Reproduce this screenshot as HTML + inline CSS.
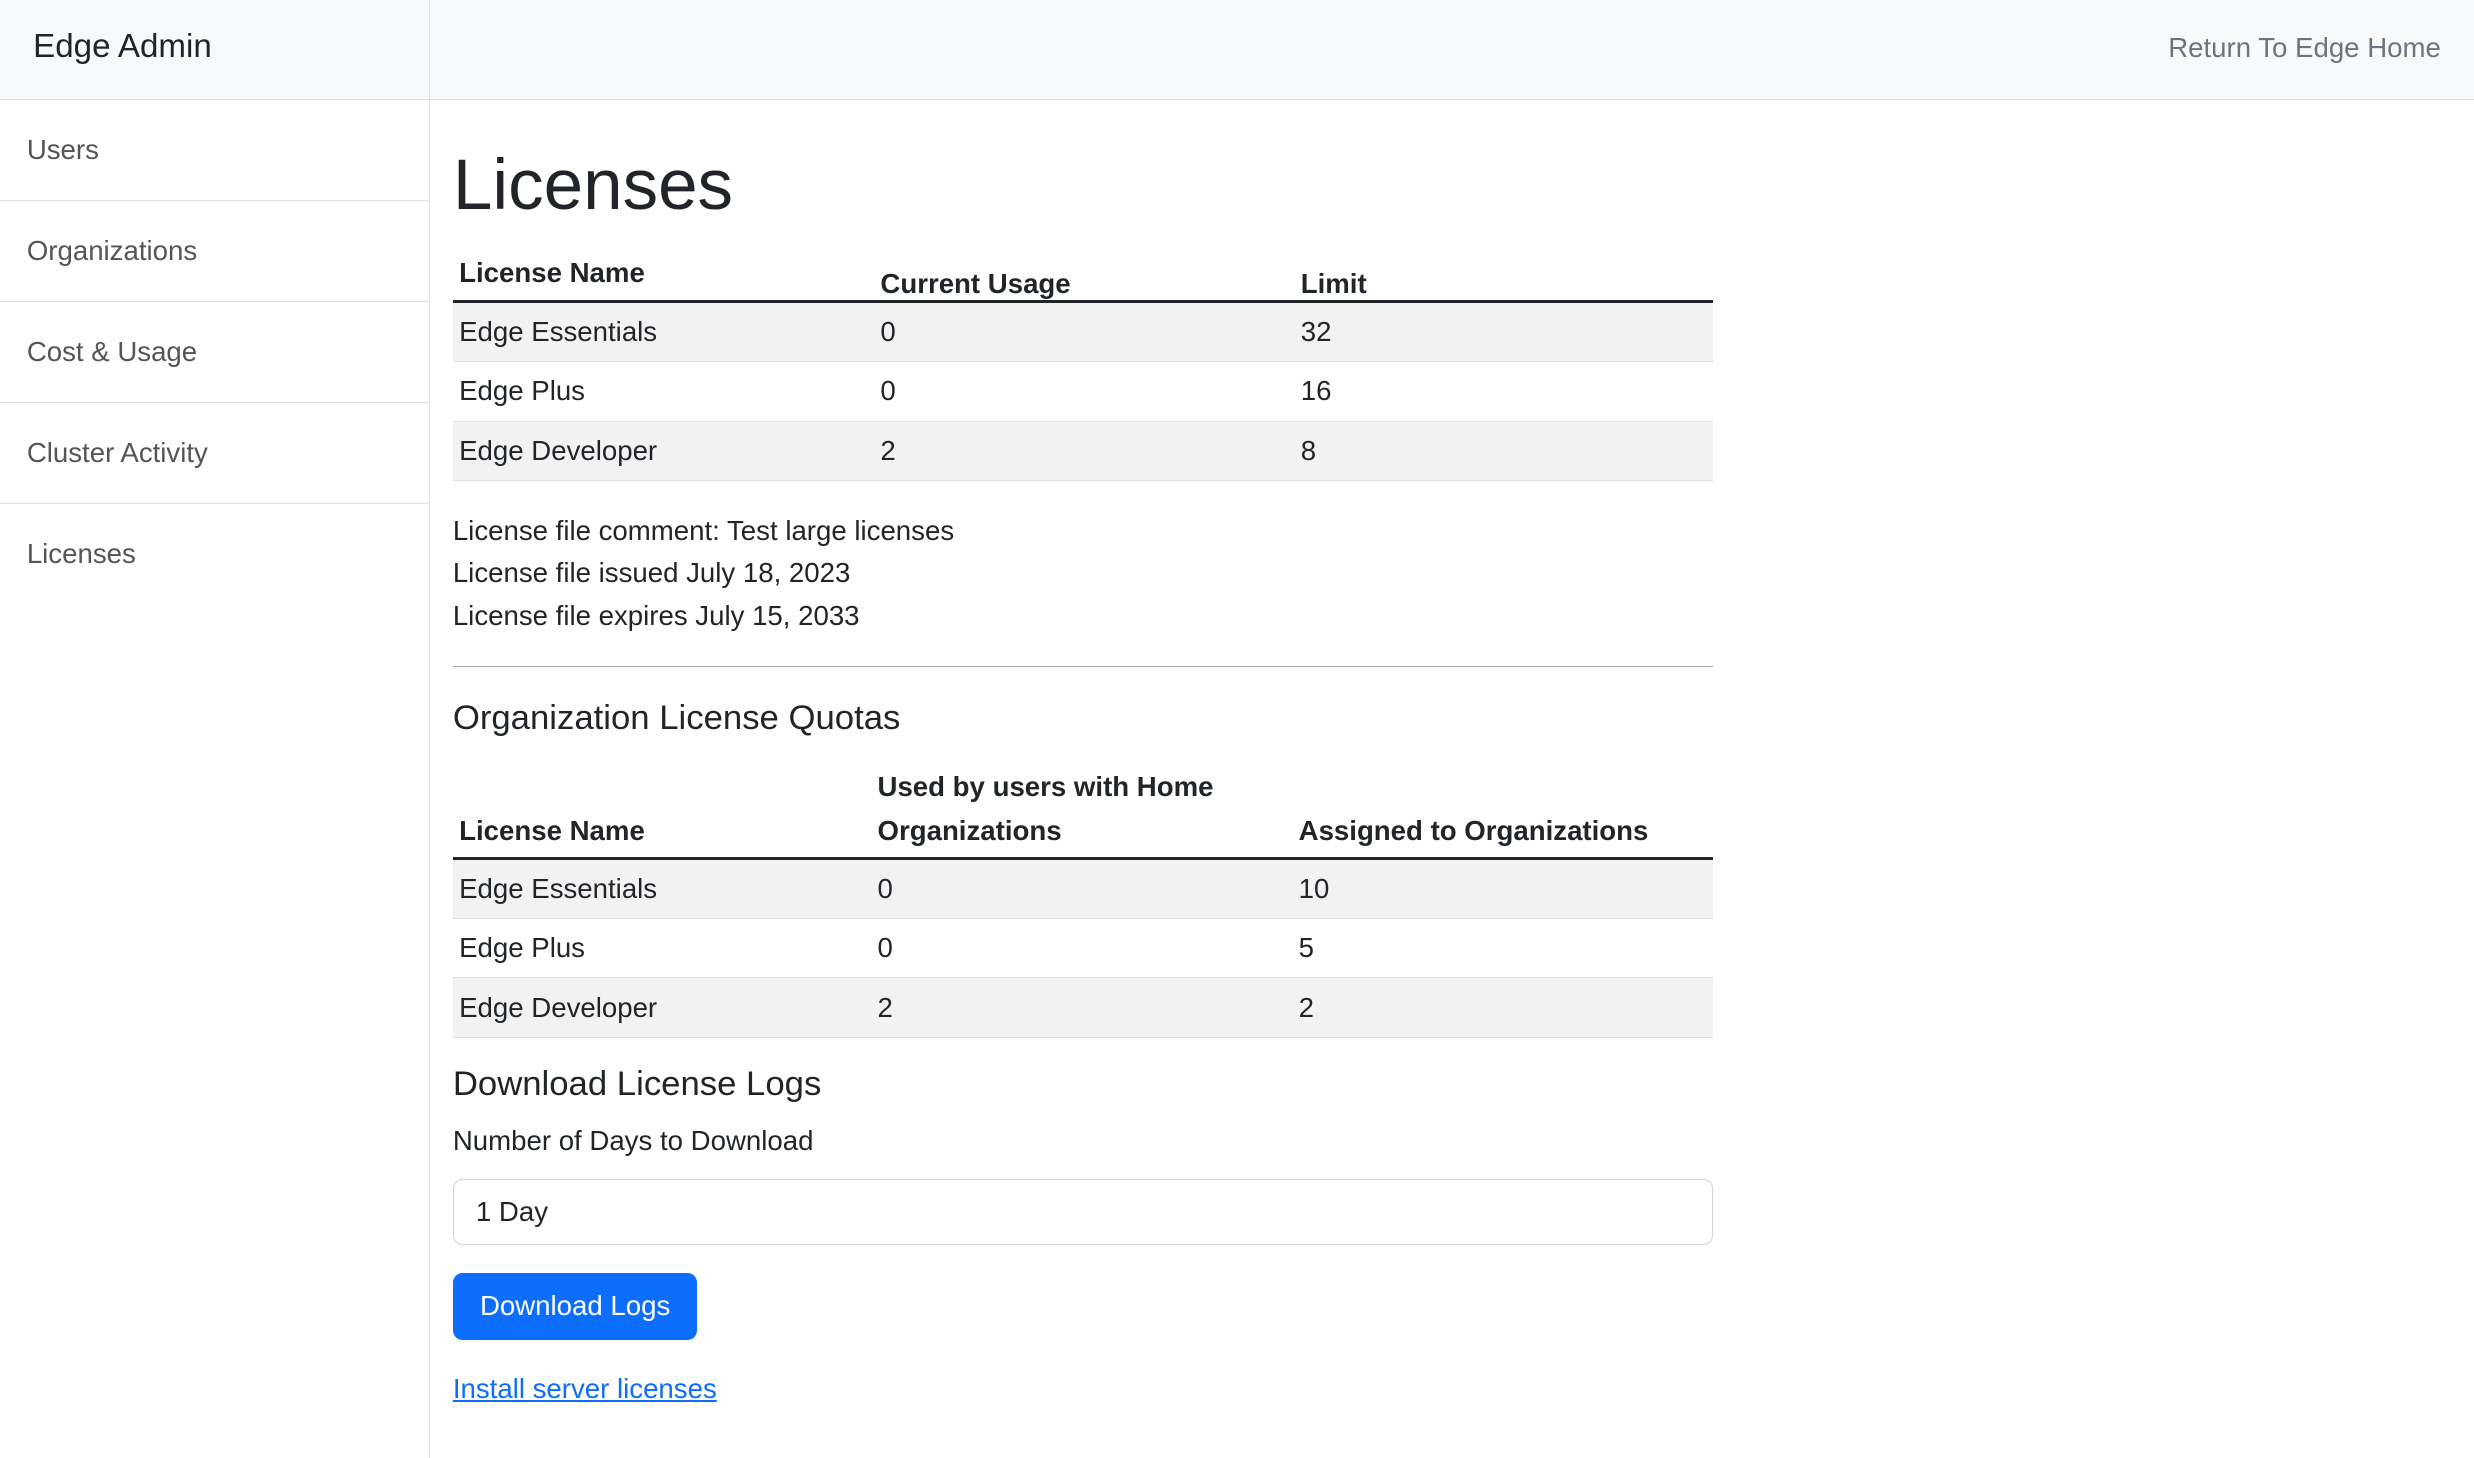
<!DOCTYPE html>
<html><head><meta charset="utf-8"><style>
html,body{margin:0;padding:0;}
body{width:1568px;height:924px;zoom:1.5778;font-family:"Liberation Sans",sans-serif;color:#212529;background:#fff;position:relative;overflow:hidden;font-size:17.5px;}
.top{position:absolute;left:0;top:0;width:1568px;height:63px;background:#f8f9fa;border-bottom:1px solid #dee2e6;}
.brand{position:absolute;left:21px;top:18px;font-size:21px;}
.ret{position:absolute;right:21px;top:20px;font-size:17.5px;color:#6c757d;}
.side{position:absolute;left:0;top:0;width:272px;height:924px;border-right:1px solid #dee2e6;}
.side .hd{height:63px;background:#f8f9fa;border-bottom:1px solid #dee2e6;}
.item{height:64px;border-bottom:1px solid #dee2e6;box-sizing:border-box;padding-left:17px;line-height:64px;color:#555;font-size:17.5px;}
.item:last-child{border-bottom:none;}
.main{position:absolute;left:287px;top:0;width:799px;}
h1{position:absolute;top:92px;left:0;margin:0;font-size:45px;font-weight:normal;}
table{border-collapse:collapse;width:799px;position:absolute;left:0;font-size:17.5px;}
th{text-align:left;font-weight:bold;padding:0 4px;vertical-align:bottom;border-bottom:2px solid #212529;width:266px;}
td{padding:0 4px;height:37px;border-bottom:1px solid #dee2e6;}
tr.s td{background:#f2f2f2;}
.abs{position:absolute;left:0;}
a{color:#0d6efd;}
</style></head><body>
<div class="top"><div class="ret">Return To Edge Home</div></div>
<div class="side"><div class="hd"></div>
<div class="item">Users</div><div class="item">Organizations</div><div class="item">Cost &amp; Usage</div><div class="item">Cluster Activity</div><div class="item">Licenses</div></div>
<div class="brand">Edge Admin</div>
<div class="main">
<h1>Licenses</h1>
<table style="top:155px"><tr><th style="height:35px;line-height:35px">License Name</th><th>Current Usage</th><th>Limit</th></tr>
<tr class="s"><td>Edge Essentials</td><td>0</td><td>32</td></tr>
<tr><td>Edge Plus</td><td>0</td><td>16</td></tr>
<tr class="s"><td>Edge Developer</td><td>2</td><td>8</td></tr></table>
<div class="abs" style="top:323px;line-height:27px">License file comment: Test large licenses<br>License file issued July 18, 2023<br>License file expires July 15, 2033</div>
<div class="abs" style="top:422px;width:799px;border-top:1px solid #aaa"></div>
<div class="abs" style="top:443px;font-size:22px">Organization License Quotas</div>
<table style="top:482px"><tr><th style="height:59px;line-height:28px;padding-bottom:2px">License Name</th><th style="line-height:28px;padding-bottom:2px">Used by users with Home Organizations</th><th style="line-height:28px;padding-bottom:2px">Assigned to Organizations</th></tr>
<tr class="s"><td>Edge Essentials</td><td>0</td><td>10</td></tr>
<tr><td>Edge Plus</td><td>0</td><td>5</td></tr>
<tr class="s"><td>Edge Developer</td><td>2</td><td>2</td></tr></table>
<div class="abs" style="top:675px;font-size:22px">Download License Logs</div>
<div class="abs" style="top:713px">Number of Days to Download</div>
<div class="abs" style="top:747px;width:799px;height:42px;box-sizing:border-box;border:1px solid #ced4da;border-radius:6px;padding-left:14px;line-height:40px">1 Day</div>
<div class="abs" style="top:807px;width:155px;height:42px;background:#0d6efd;color:#fff;border-radius:6px;text-align:center;line-height:42px">Download Logs</div>
<div class="abs" style="top:870px"><a href="#">Install server licenses</a></div>
</div>
</body></html>
